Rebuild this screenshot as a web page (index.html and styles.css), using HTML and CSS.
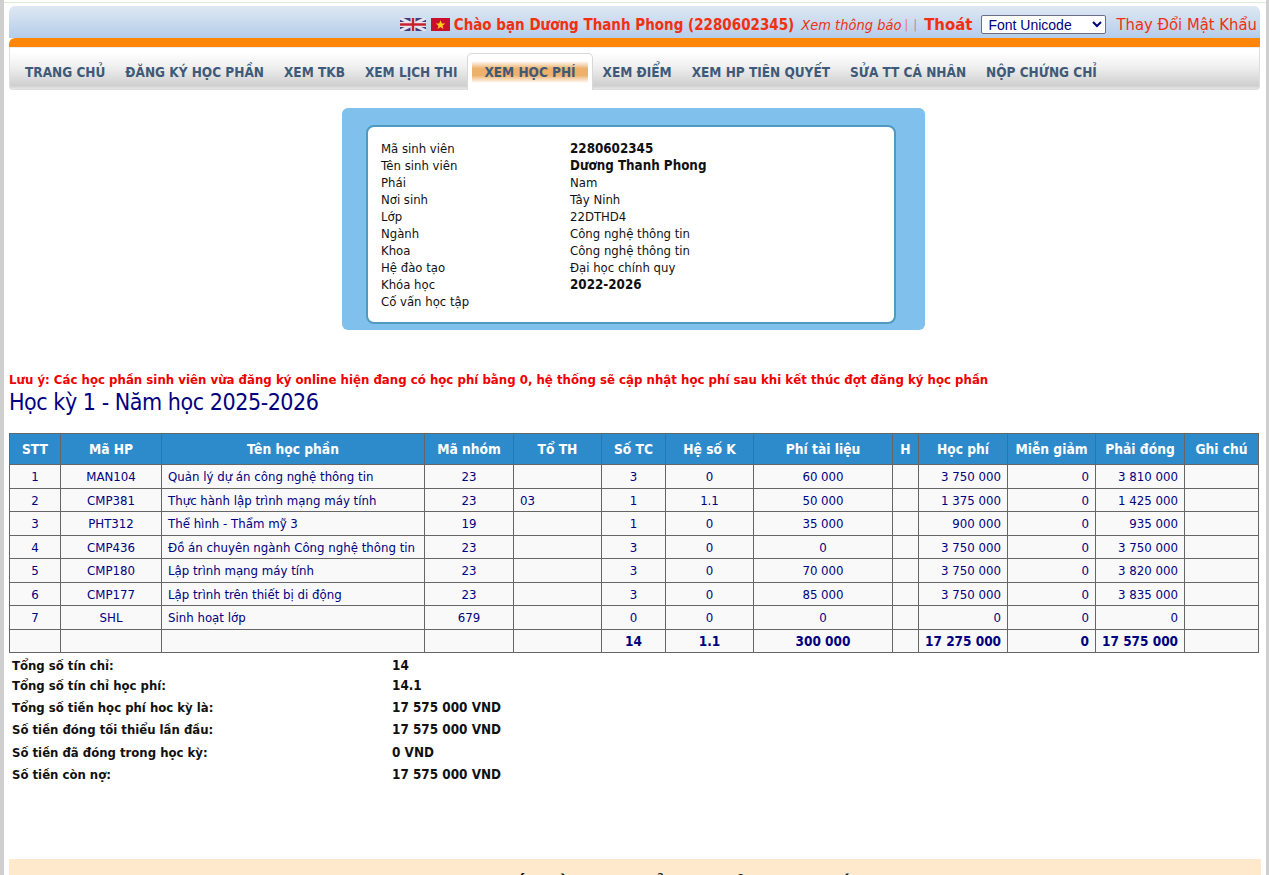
FILE: index.html
```html
<!DOCTYPE html>
<html lang="vi">
<head>
    <meta charset="UTF-8">
    <meta name="viewport" content="width=device-width, initial-scale=1.0">
    <title>Xem học phí</title>
    <link rel="stylesheet" href="styles.css">
</head>
<body>
    <div class="page">
        <div class="top-bar">
            <svg class="flag" width="26" height="13" viewBox="0 0 26 13">
                <rect width="26" height="13" fill="#3c3f7e"/>
                <path d="M0 0L26 13M26 0L0 13" stroke="#e8e4ee" stroke-width="3"/>
                <path d="M13 0V13M0 6.5H26" stroke="#e8e4ee" stroke-width="5"/>
                <path d="M13 0V13M0 6.5H26" stroke="#c8202f" stroke-width="2.4"/>
            </svg>
            <svg class="flag flag-vn" width="19" height="13" viewBox="0 0 19 13">
                <rect width="19" height="13" fill="#c8102e"/>
                <path d="M9.5 2.2L10.8 5.6H14.2L11.5 7.7L12.5 11L9.5 9L6.5 11L7.5 7.7L4.8 5.6H8.2Z" fill="#fcd116"/>
            </svg>
            <b class="greeting">Chào bạn Dương Thanh Phong (2280602345)</b>
            <i class="notice">Xem thông báo</i>
            <span class="pipes">| |</span>
            <b class="logout">Thoát</b>
            <select class="font-select">
                <option>Font Unicode</option>
            </select>
            <span class="change-pass">Thay Đổi Mật Khẩu</span>
        </div>
        <div class="orange-bar"></div>
        <ul class="menu">
            <li>TRANG CHỦ</li>
            <li>ĐĂNG KÝ HỌC PHẦN</li>
            <li>XEM TKB</li>
            <li>XEM LỊCH THI</li>
            <li class="active"><span>XEM HỌC PHÍ</span></li>
            <li>XEM ĐIỂM</li>
            <li>XEM HP TIÊN QUYẾT</li>
            <li>SỬA TT CÁ NHÂN</li>
            <li>NỘP CHỨNG CHỈ</li>
        </ul>

        <div class="info-box">
            <div class="info-inner">
                <span>Mã sinh viên</span><b>2280602345</b>
                <span>Tên sinh viên</span><b>Dương Thanh Phong</b>
                <span>Phái</span><span>Nam</span>
                <span>Nơi sinh</span><span>Tây Ninh</span>
                <span>Lớp</span><span>22DTHD4</span>
                <span>Ngành</span><span>Công nghệ thông tin</span>
                <span>Khoa</span><span>Công nghệ thông tin</span>
                <span>Hệ đào tạo</span><span>Đại học chính quy</span>
                <span>Khóa học</span><b>2022-2026</b>
                <span>Cố vấn học tập</span><span></span>
            </div>
        </div>

        <p class="warning">Lưu ý: Các học phần sinh viên vừa đăng ký online hiện đang có học phí bằng 0, hệ thống sẽ cập nhật học phí sau khi kết thúc đợt đăng ký học phần</p>
        <h2 class="term">Học kỳ 1 - Năm học 2025-2026</h2>

        <table class="fees">
            <colgroup>
                <col class="c1"><col class="c2"><col class="c3"><col class="c4"><col class="c5"><col class="c6"><col class="c7">
                <col class="c8"><col class="c9"><col class="c10"><col class="c11"><col class="c12"><col class="c13">
            </colgroup>
            <thead>
                <tr>
                    <th>STT</th><th>Mã HP</th><th>Tên học phần</th><th>Mã nhóm</th><th>Tổ TH</th><th>Số TC</th><th>Hệ số K</th>
                    <th>Phí tài liệu</th><th>H</th><th>Học phí</th><th>Miễn giảm</th><th>Phải đóng</th><th>Ghi chú</th>
                </tr>
            </thead>
            <tbody>
                <tr>
                    <td class="mid">1</td><td class="mid">MAN104</td><td>Quản lý dự án công nghệ thông tin</td><td class="mid">23</td><td></td><td class="mid">3</td><td class="mid">0</td>
                    <td class="mid">60 000</td><td></td><td class="num">3 750 000</td><td class="num">0</td><td class="num">3 810 000</td><td></td>
                </tr>
                <tr>
                    <td class="mid">2</td><td class="mid">CMP381</td><td>Thực hành lập trình mạng máy tính</td><td class="mid">23</td><td>03</td><td class="mid">1</td><td class="mid">1.1</td>
                    <td class="mid">50 000</td><td></td><td class="num">1 375 000</td><td class="num">0</td><td class="num">1 425 000</td><td></td>
                </tr>
                <tr>
                    <td class="mid">3</td><td class="mid">PHT312</td><td>Thể hình - Thẩm mỹ 3</td><td class="mid">19</td><td></td><td class="mid">1</td><td class="mid">0</td>
                    <td class="mid">35 000</td><td></td><td class="num">900 000</td><td class="num">0</td><td class="num">935 000</td><td></td>
                </tr>
                <tr>
                    <td class="mid">4</td><td class="mid">CMP436</td><td>Đồ án chuyên ngành Công nghệ thông tin</td><td class="mid">23</td><td></td><td class="mid">3</td><td class="mid">0</td>
                    <td class="mid">0</td><td></td><td class="num">3 750 000</td><td class="num">0</td><td class="num">3 750 000</td><td></td>
                </tr>
                <tr>
                    <td class="mid">5</td><td class="mid">CMP180</td><td>Lập trình mạng máy tính</td><td class="mid">23</td><td></td><td class="mid">3</td><td class="mid">0</td>
                    <td class="mid">70 000</td><td></td><td class="num">3 750 000</td><td class="num">0</td><td class="num">3 820 000</td><td></td>
                </tr>
                <tr>
                    <td class="mid">6</td><td class="mid">CMP177</td><td>Lập trình trên thiết bị di động</td><td class="mid">23</td><td></td><td class="mid">3</td><td class="mid">0</td>
                    <td class="mid">85 000</td><td></td><td class="num">3 750 000</td><td class="num">0</td><td class="num">3 835 000</td><td></td>
                </tr>
                <tr>
                    <td class="mid">7</td><td class="mid">SHL</td><td>Sinh hoạt lớp</td><td class="mid">679</td><td></td><td class="mid">0</td><td class="mid">0</td>
                    <td class="mid">0</td><td></td><td class="num">0</td><td class="num">0</td><td class="num">0</td><td></td>
                </tr>
                <tr class="total">
                    <td></td><td></td><td></td><td></td><td></td><td class="mid">14</td><td class="mid">1.1</td>
                    <td class="mid">300 000</td><td></td><td class="num">17 275 000</td><td class="num">0</td><td class="num">17 575 000</td><td></td>
                </tr>
            </tbody>
        </table>

        <div class="summary">
            <div class="sum-row"><span>Tổng số tín chỉ:</span><b>14</b></div>
            <div class="sum-row second"><span>Tổng số tín chỉ học phí:</span><b>14.1</b></div>
            <div class="sum-row tall"><span>Tổng số tiền học phí hoc kỳ là:</span><b>17 575 000 VND</b></div>
            <div class="sum-row tall"><span>Số tiền đóng tối thiểu lần đầu:</span><b>17 575 000 VND</b></div>
            <div class="sum-row tall"><span>Số tiền đã đóng trong học kỳ:</span><b>0 VND</b></div>
            <div class="sum-row tall"><span>Số tiền còn nợ:</span><b>17 575 000 VND</b></div>
        </div>

        <div class="bottom-banner">SỐ TIỀN CHUYỂN KHOẢN CHI TIẾT</div>
    </div>
</body>
</html>
```

FILE: styles.css
```css
html, body {
    height: 875px;
    overflow: hidden;
}
body {
    margin: 0;
    background: linear-gradient(to right, #cfcfcf 4px, transparent 4px, transparent 1266px, #cfcfcf 1266px);
    font-family: "DejaVu Sans Condensed", "DejaVu Sans", sans-serif;
    font-size: 13px;
}
.page {
    margin: 2px 3px 0 4px;
    height: 875px;
    padding: 3px 5px 0;
    background-color: white;
    border-top: 1px solid #dcebd2;
    box-sizing: border-box;
    overflow: hidden;
}
.top-bar {
    display: flex;
    justify-content: flex-end;
    align-items: center;
    width: 1251px;
    height: 32px;
    padding: 5px 3px 0 0;
    background: linear-gradient(#dfe8f3, #b4cdea);
    border-radius: 6px 6px 0 0;
    box-sizing: border-box;
    color: #f03010;
    font-size: 16px;
}
.flag {
    margin-right: 5px;
}
.flag-vn {
    margin-right: 4px;
}
.greeting {
    font-size: 15px;
}
.notice {
    margin-left: 7px;
    font-size: 14.5px;
}
.pipes {
    margin-left: 3px;
    font-size: 12px;
    word-spacing: 2px;
    color: #e87070;
}
.logout {
    margin-left: 7px;
    font-size: 16.6px;
}
.font-select {
    width: 125px;
    height: 19px;
    margin: 0 10px 0 9px;
    padding: 0 2px;
    border: 1px solid #6a6f86;
    border-radius: 2px;
    background-color: white;
    color: #000080;
    font-family: "Liberation Sans", sans-serif;
    font-size: 14px;
}
.change-pass {
    font-size: 16.5px;
}
.orange-bar {
    width: 1251px;
    height: 9px;
    background-color: #ff8608;
    border-radius: 6px 0 0 0;
}
.menu {
    display: flex;
    width: 1251px;
    height: 43px;
    margin: 0;
    padding: 0 0 0 5px;
    list-style: none;
    background: linear-gradient(#ffffff 10%, #f0f0f0 45%, #cfcfcf 92%, #e6e6e6);
    border: 1px solid #dedede;
    border-top: 1px solid #eee;
    border-radius: 0 0 4px 4px;
    box-sizing: border-box;
}
.menu li {
    display: flex;
    align-items: center;
    padding: 7px 10px 0;
    color: #3e5a78;
    font-size: 13.5px;
    font-weight: bold;
    white-space: nowrap;
}
.menu li.active {
    margin: 5px 0 -1px;
    padding: 0 4px;
    background-color: white;
    border: 1px solid #d8d8d8;
    border-bottom: 0;
    border-radius: 5px 5px 0 0;
}
.menu li.active span {
    padding: 3px 12px;
    background: linear-gradient(#fff, #eeb06a 35%, #eeb06a 65%, #fff);
    color: #3e5a78;
}
.info-box {
    width: 583px;
    height: 222px;
    margin: 18px 0 0 333px;
    padding: 17px 29px 0 24px;
    background-color: #7fc0ec;
    border-radius: 6px;
    box-sizing: border-box;
}
.info-inner {
    display: grid;
    grid-template-columns: 189px 1fr;
    grid-auto-rows: 17px;
    height: 199px;
    padding: 13px 13px 0;
    background-color: white;
    border: 2px solid #4f9abf;
    border-radius: 8px;
    box-sizing: border-box;
    color: #111;
    font-size: 13px;
    line-height: 17px;
}
.info-inner b {
    font-size: 13.3px;
}
.warning {
    margin: 42px 0 0;
    color: #f00000;
    font-size: 13.1px;
    font-weight: bold;
    line-height: 16px;
    white-space: nowrap;
}
.term {
    margin: 0;
    color: #000080;
    font-size: 23px;
    font-weight: normal;
    letter-spacing: -0.45px;
    line-height: 28px;
}
.fees {
    width: 1249px;
    margin-top: 17px;
    border-collapse: collapse;
    table-layout: fixed;
    color: #000080;
    font-size: 13.1px;
}
.fees th, .fees td {
    border: 1px solid #666;
}
.fees th {
    height: 30px;
    padding: 0;
    background-color: #2d8bcb;
    color: white;
    font-size: 13.7px;
    font-weight: bold;
}
.fees td {
    height: 21.5px;
    padding: 1px 6px 0;
    background-color: #f9f9f9;
    white-space: nowrap;
}
.fees td.mid {
    text-align: center;
}
.fees td.num {
    text-align: right;
}
.fees .total td {
    height: 22.5px;
    padding-top: 0;
    font-size: 13.5px;
    font-weight: bold;
}
.c1 { width: 51px; }
.c2 { width: 101px; }
.c3 { width: 263px; }
.c4 { width: 89px; }
.c5 { width: 88px; }
.c6 { width: 64px; }
.c7 { width: 88px; }
.c8 { width: 139px; }
.c9 { width: 26px; }
.c10 { width: 89px; }
.c11 { width: 88px; }
.c12 { width: 89px; }
.c13 { width: 74px; }
.summary {
    margin: 2px 0 0 3px;
    color: #111;
    font-size: 13px;
    font-weight: bold;
}
.summary b {
    font-size: 13.4px;
}
.sum-row {
    display: grid;
    grid-template-columns: 380px 1fr;
    height: 20px;
    align-items: center;
}
.sum-row.second {
    height: 21px;
}
.sum-row.tall {
    height: 22.5px;
}
.bottom-banner {
    width: 1252px;
    height: 40px;
    margin-top: 73px;
    padding-left: 88px;
    background-color: #ffe9cc;
    box-sizing: border-box;
    color: #111;
    font-size: 21.5px;
    font-weight: bold;
    line-height: 59px;
    text-align: center;
}
```
